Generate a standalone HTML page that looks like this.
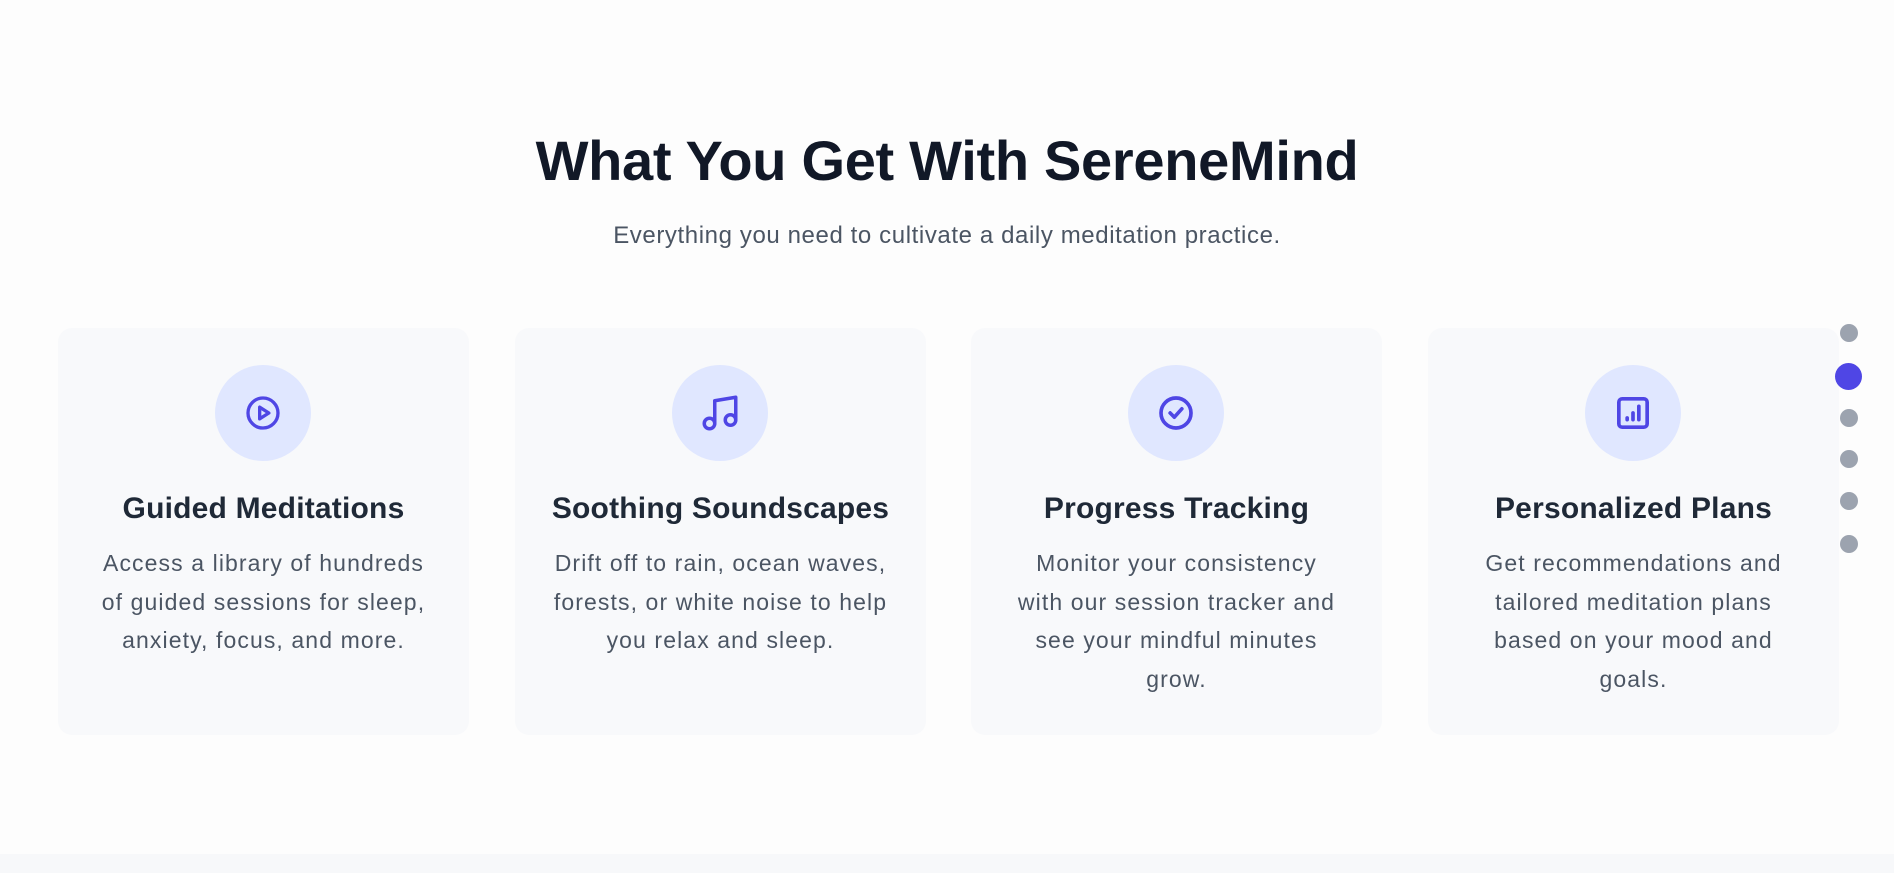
<!DOCTYPE html>
<html><head><style>
*{margin:0;padding:0;box-sizing:border-box}
body{width:1894px;height:873px;background:#fdfdfd;font-family:"Liberation Sans",Arial,sans-serif;position:relative;overflow:hidden}
h1{position:absolute;top:128px;left:0;width:1894px;text-align:center;font-size:56px;font-weight:700;color:#111827;letter-spacing:-0.3px}
.sub{position:absolute;top:222px;left:0;width:1894px;text-align:center;font-size:24px;letter-spacing:0.6px;color:#4b5563}
.card{position:absolute;top:328px;width:411px;height:407px;background:#f8f9fb;border-radius:14px;text-align:center}
.ic{position:absolute;left:157px;top:37px;width:96px;height:96px;border-radius:50%;background:#e0e7ff;display:flex;align-items:center;justify-content:center}
.card h3{position:absolute;top:164px;left:0;width:100%;font-size:30px;letter-spacing:0.2px;font-weight:700;color:#1f2937}
.card p{position:absolute;top:216px;left:0;right:0;font-size:23px;letter-spacing:1.1px;line-height:38.5px;color:#4b5563;white-space:nowrap}
.dot{position:absolute;left:1840px;width:18px;height:18px;border-radius:50%;background:#9ca3af}
.band{position:absolute;left:0;top:854px;width:1894px;height:19px;background:#f7f8fa}
</style></head><body>
<h1>What You Get With SereneMind</h1>
<div class="sub">Everything you need to cultivate a daily meditation practice.</div>

<div class="card" style="left:58px"><div class="ic"><svg width="40" height="40" viewBox="0 0 24 24" fill="none" stroke="#4f46e5" stroke-width="2" stroke-linecap="round" stroke-linejoin="round"><circle cx="12" cy="12" r="9"/><path d="M10 8.5v7l5.5-3.5z"/></svg></div>
<h3>Guided Meditations</h3><p>Access a library of hundreds<br>of guided sessions for sleep,<br>anxiety, focus, and more.</p></div>

<div class="card" style="left:515px"><div class="ic"><svg width="42" height="42" viewBox="0 0 24 24" fill="none" stroke="#4f46e5" stroke-width="2" stroke-linecap="round" stroke-linejoin="round"><path d="M9 18V5l12-2v13"/><circle cx="6" cy="18" r="3"/><circle cx="18" cy="16" r="3"/></svg></div>
<h3>Soothing Soundscapes</h3><p>Drift off to rain, ocean waves,<br>forests, or white noise to help<br>you relax and sleep.</p></div>

<div class="card" style="left:971px"><div class="ic"><svg width="40" height="40" viewBox="0 0 24 24" fill="none" stroke="#4f46e5" stroke-width="2.2" stroke-linecap="round" stroke-linejoin="round"><circle cx="12" cy="12" r="9"/><path d="M8.5 12l2.5 2.5 4.5-5"/></svg></div>
<h3>Progress Tracking</h3><p>Monitor your consistency<br>with our session tracker and<br>see your mindful minutes<br>grow.</p></div>

<div class="card" style="left:1428px"><div class="ic"><svg width="40" height="40" viewBox="0 0 24 24" fill="none" stroke="#4f46e5" stroke-width="2.2" stroke-linecap="round" stroke-linejoin="round"><rect x="3.5" y="3.5" width="17" height="17" rx="2"/><path d="M8.5 16v-1M12 16v-4M15.5 16V8"/></svg></div>
<h3>Personalized Plans</h3><p>Get recommendations and<br>tailored meditation plans<br>based on your mood and<br>goals.</p></div>

<div class="dot" style="top:324px"></div>
<div class="dot" style="top:363px;left:1835px;width:27px;height:27px;background:#4f46e5"></div>
<div class="dot" style="top:409px"></div>
<div class="dot" style="top:450px"></div>
<div class="dot" style="top:492px"></div>
<div class="dot" style="top:535px"></div>
<div class="band"></div>
</body></html>
